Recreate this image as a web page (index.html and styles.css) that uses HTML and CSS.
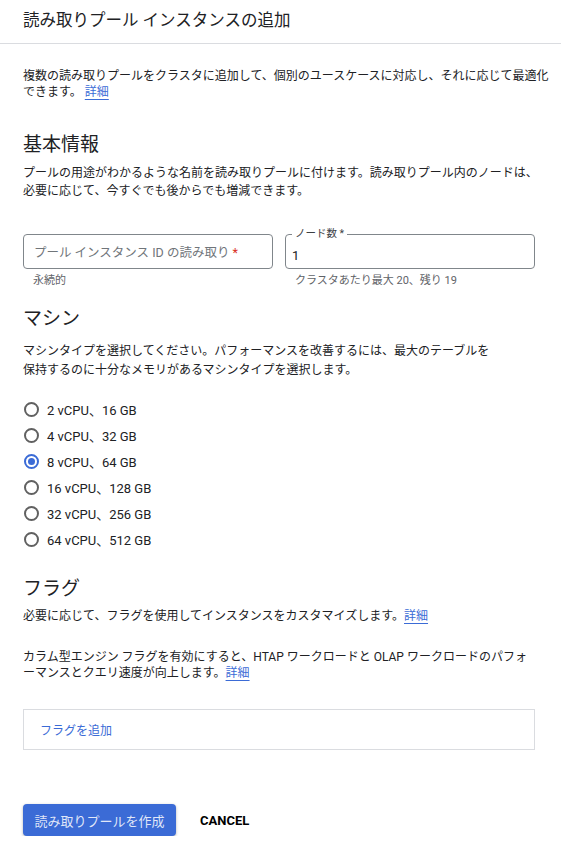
FILE: index.html
```html
<!DOCTYPE html>
<html lang="ja">
<head>
<meta charset="utf-8">
<title>読み取りプール インスタンスの追加</title>
<link rel="stylesheet" href="styles.css">
</head>
<body>
<header class="header">
  <h1 class="title">読み取りプール インスタンスの追加</h1>
</header>
<main class="content">
  <p class="intro">複数の読み取りプールをクラスタに追加して、個別のユースケースに対応し、それに応じて最適化<br>できます。 <a class="link" href="#">詳細</a></p>

  <h2 class="section-title basic-title">基本情報</h2>
  <p class="desc desc-basic">プールの用途がわかるような名前を読み取りプールに付けます。読み取りプール内のノードは、<br>必要に応じて、今すぐでも後からでも増減できます。</p>

  <div class="fields">
    <div class="field">
      <div class="box">
        <span class="placeholder">プール インスタンス ID の読み取り <span class="req">*</span></span>
      </div>
      <div class="hint">永続的</div>
    </div>
    <div class="field">
      <div class="box box-filled">
        <span class="float-label">ノード数 *</span>
        <span class="value">1</span>
      </div>
      <div class="hint">クラスタあたり最大 20、残り 19</div>
    </div>
  </div>

  <h2 class="section-title machine-title">マシン</h2>
  <p class="desc desc-machine">マシンタイプを選択してください。パフォーマンスを改善するには、最大のテーブルを<br>保持するのに十分なメモリがあるマシンタイプを選択します。</p>

  <ul class="radios">
    <li class="radio"><span class="circle"></span><span class="rlabel">2 vCPU、16 GB</span></li>
    <li class="radio"><span class="circle"></span><span class="rlabel">4 vCPU、32 GB</span></li>
    <li class="radio"><span class="circle checked"></span><span class="rlabel">8 vCPU、64 GB</span></li>
    <li class="radio"><span class="circle"></span><span class="rlabel">16 vCPU、128 GB</span></li>
    <li class="radio"><span class="circle"></span><span class="rlabel">32 vCPU、256 GB</span></li>
    <li class="radio"><span class="circle"></span><span class="rlabel">64 vCPU、512 GB</span></li>
  </ul>

  <h2 class="section-title flag-title">フラグ</h2>
  <p class="desc desc-flag1">必要に応じて、フラグを使用してインスタンスをカスタマイズします。<a class="link" href="#">詳細</a></p>
  <p class="desc desc-flag2">カラム型エンジン フラグを有効にすると、HTAP ワークロードと OLAP ワークロードのパフォ<br>ーマンスとクエリ速度が向上します。<a class="link" href="#">詳細</a></p>

  <div class="flag-box"><span class="flag-add">フラグを追加</span></div>

  <div class="actions">
    <button class="btn-primary">読み取りプールを作成</button>
    <button class="btn-text">CANCEL</button>
  </div>
</main>
</body>
</html>
```

FILE: styles.css
```css
* { box-sizing: border-box; }
html, body {
  margin: 0;
  padding: 0;
  background: #ffffff;
}
body {
  font-family: Roboto, "Noto Sans CJK JP", sans-serif;
  color: #202124;
  width: 561px;
  overflow-x: hidden;
}
.header {
  height: 44px;
  border-bottom: 1px solid #dadce0;
  padding: 0 23px;
  display: flex;
  align-items: center;
}
.title {
  margin: 0 0 1px 0;
  font-size: 16.5px;
  font-weight: 400;
  line-height: 22px;
  white-space: nowrap;
}
.content {
  padding: 0 26px 0 23px;
}
p { margin: 0; }
.intro {
  margin-top: 24px;
  font-size: 12px;
  line-height: 16px;
  white-space: nowrap;
}
.link {
  color: #3b6bd6;
  text-decoration: underline;
  text-underline-offset: 3px;
}
.section-title {
  margin: 0;
  font-size: 19px;
  font-weight: 400;
  line-height: 22px;
}
.basic-title { margin-top: 34px; }
.desc {
  font-size: 12px;
  line-height: 18px;
  white-space: nowrap;
}
.desc-basic { margin-top: 8px; }
.fields {
  margin-top: 34px;
  display: flex;
  gap: 12px;
  width: 512px;
}
.field { flex: 1; }
.box {
  position: relative;
  height: 35px;
  border: 1px solid #80868b;
  border-radius: 4px;
  display: flex;
  align-items: center;
  padding: 0 10px;
}
.placeholder {
  font-size: 12.5px;
  color: #70757a;
  white-space: nowrap;
}
.req { color: #d93025; }
.box-filled { padding: 0 6px; }
.float-label {
  position: absolute;
  top: -7px;
  left: 6px;
  padding: 0 3px;
  background: #fff;
  font-size: 10.5px;
  line-height: 12px;
  color: #3c4043;
}
.value {
  font-size: 13px;
  margin-top: 7px;
}
.hint {
  margin-top: 5px;
  padding-left: 10px;
  font-size: 11px;
  line-height: 14px;
  color: #5f6368;
  white-space: nowrap;
}
.machine-title { margin-top: 20px; }
.desc-machine { margin-top: 12px; line-height: 19px; }
.radios {
  list-style: none;
  margin: 16px 0 0 0;
  padding: 0;
}
.radio {
  height: 26px;
  display: flex;
  align-items: center;
}
.circle {
  width: 15px;
  height: 15px;
  border: 2px solid #616161;
  border-radius: 50%;
  margin-left: 1px;
  flex: none;
  display: flex;
  align-items: center;
  justify-content: center;
}
.circle.checked { border-color: #3b6bd6; }
.circle.checked::after {
  content: "";
  width: 7px;
  height: 7px;
  border-radius: 50%;
  background: #3b6bd6;
}
.rlabel {
  margin-left: 8px;
  font-size: 13px;
  white-space: nowrap;
}
.flag-title { margin-top: 26px; }
.desc-flag1 { margin-top: 8px; line-height: 16px; }
.desc-flag2 { margin-top: 25px; line-height: 16px; }
.flag-box {
  margin-top: 28px;
  width: 512px;
  height: 41px;
  border: 1px solid #dadce0;
  display: flex;
  align-items: center;
  padding-left: 16px;
}
.flag-add {
  font-size: 12px;
  color: #3b6bd6;
}
.actions {
  margin-top: 54px;
  display: flex;
  align-items: center;
  gap: 8px;
}
.btn-primary {
  height: 32px;
  width: 153px;
  border: none;
  border-radius: 4px;
  background: #3b6bd6;
  color: rgba(255,255,255,0.85);
  font-family: Roboto, "Noto Sans CJK JP", sans-serif;
  font-size: 13px;
  box-shadow: 0 1px 3px rgba(0,0,0,0.3);
  padding: 0;
}
.btn-text {
  height: 32px;
  border: none;
  background: transparent;
  color: #000;
  font-family: Roboto, "Noto Sans CJK JP", sans-serif;
  font-size: 13px;
  font-weight: 700;
  padding: 0 16px;
}
```
